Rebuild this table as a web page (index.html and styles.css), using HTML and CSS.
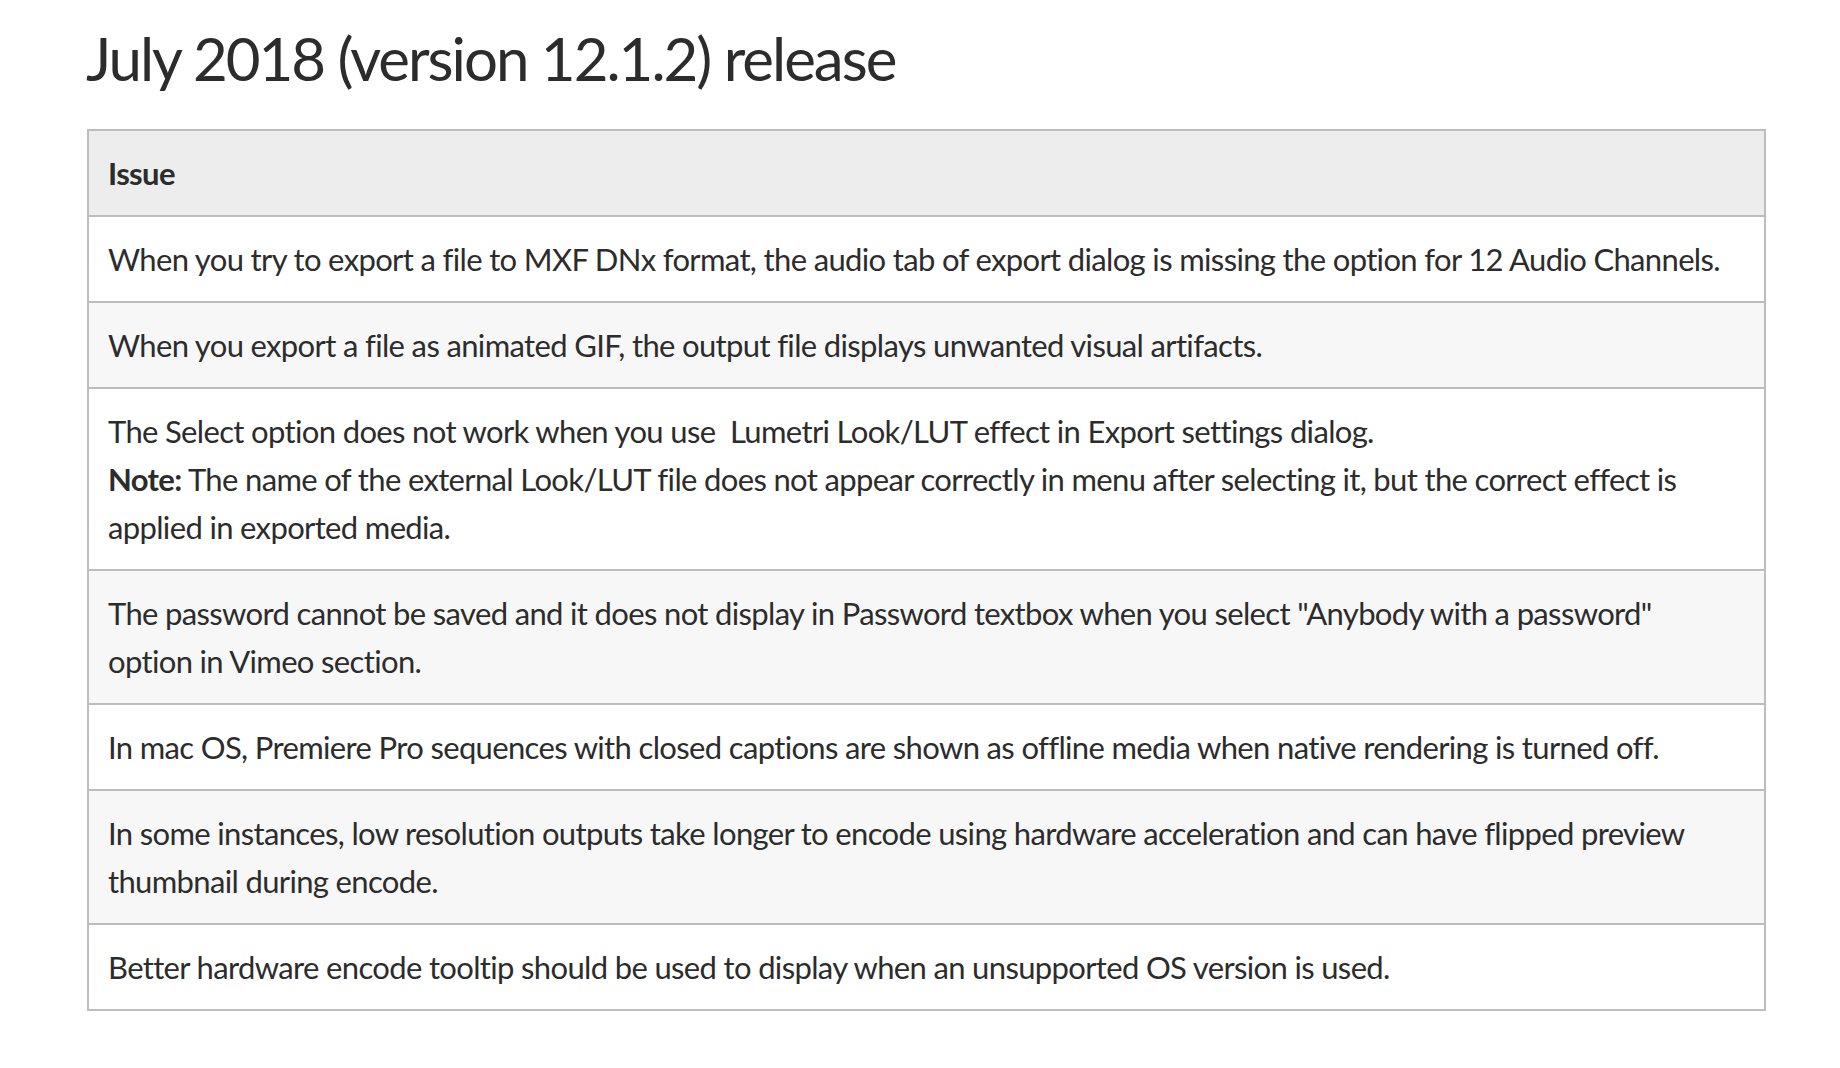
FILE: index.html
```html
<!DOCTYPE html>
<html lang="en">
<head>
<meta charset="utf-8">
<title>July 2018 (version 12.1.2) release</title>
<link rel="stylesheet" href="styles.css">
</head>
<body>
<main class="page">
  <h1 class="release-title">July 2018 (version 12.1.2) release</h1>
  <table class="issues">
    <thead>
      <tr><th>Issue</th></tr>
    </thead>
    <tbody>
      <tr><td>When you try to export a file to MXF DNx format, the audio tab of export dialog is missing the option for 12 Audio Channels.</td></tr>
      <tr><td>When you export a file as animated GIF, the output file displays unwanted visual artifacts.</td></tr>
      <tr><td>The Select option does not work when you use &nbsp;Lumetri Look/LUT effect in Export settings dialog.<br><b>Note:</b> The name of the external Look/LUT file does not appear correctly in menu after selecting it, but the correct effect is applied in exported media.</td></tr>
      <tr><td>The password cannot be saved and it does not display in Password textbox when you select "Anybody with a password" option in Vimeo section.</td></tr>
      <tr><td>In mac OS, Premiere Pro sequences with closed captions are shown as offline media when native rendering is turned off.</td></tr>
      <tr><td>In some instances, low resolution outputs take longer to encode using hardware acceleration and can have flipped preview thumbnail during encode.</td></tr>
      <tr><td>Better hardware encode tooltip should be used to display when an unsupported OS version is used.</td></tr>
    </tbody>
  </table>
</main>
</body>
</html>
```

FILE: styles.css
```css
html, body {
  margin: 0;
  padding: 0;
  background: #ffffff;
}

body {
  font-family: Lato, "Open Sans", "Liberation Sans", sans-serif;
  color: #2c2c2c;
}

.page {
  padding: 22px 0 0 87px;
  width: 1679px;
}

.release-title {
  margin: 0 0 34px -1px;
  font-size: 60px;
  font-weight: 400;
  line-height: 73px;
  letter-spacing: -2px;
  color: #2c2c2c;
}

.issues {
  width: 1679px;
  border-collapse: collapse;
  border: 2px solid #bdbdbd;
  font-size: 31px;
  line-height: 48px;
  letter-spacing: -0.65px;
}

.issues th,
.issues td {
  text-align: left;
  padding: 18px 26px 18px 19px;
  border: 2px solid #bdbdbd;
  vertical-align: top;
}

.issues th {
  background: #ededed;
  font-weight: 700;
}

.issues tbody tr:nth-child(odd) td {
  background: #ffffff;
}

.issues tbody tr:nth-child(even) td {
  background: #f7f7f7;
}

.issues b {
  font-weight: 700;
}
```
